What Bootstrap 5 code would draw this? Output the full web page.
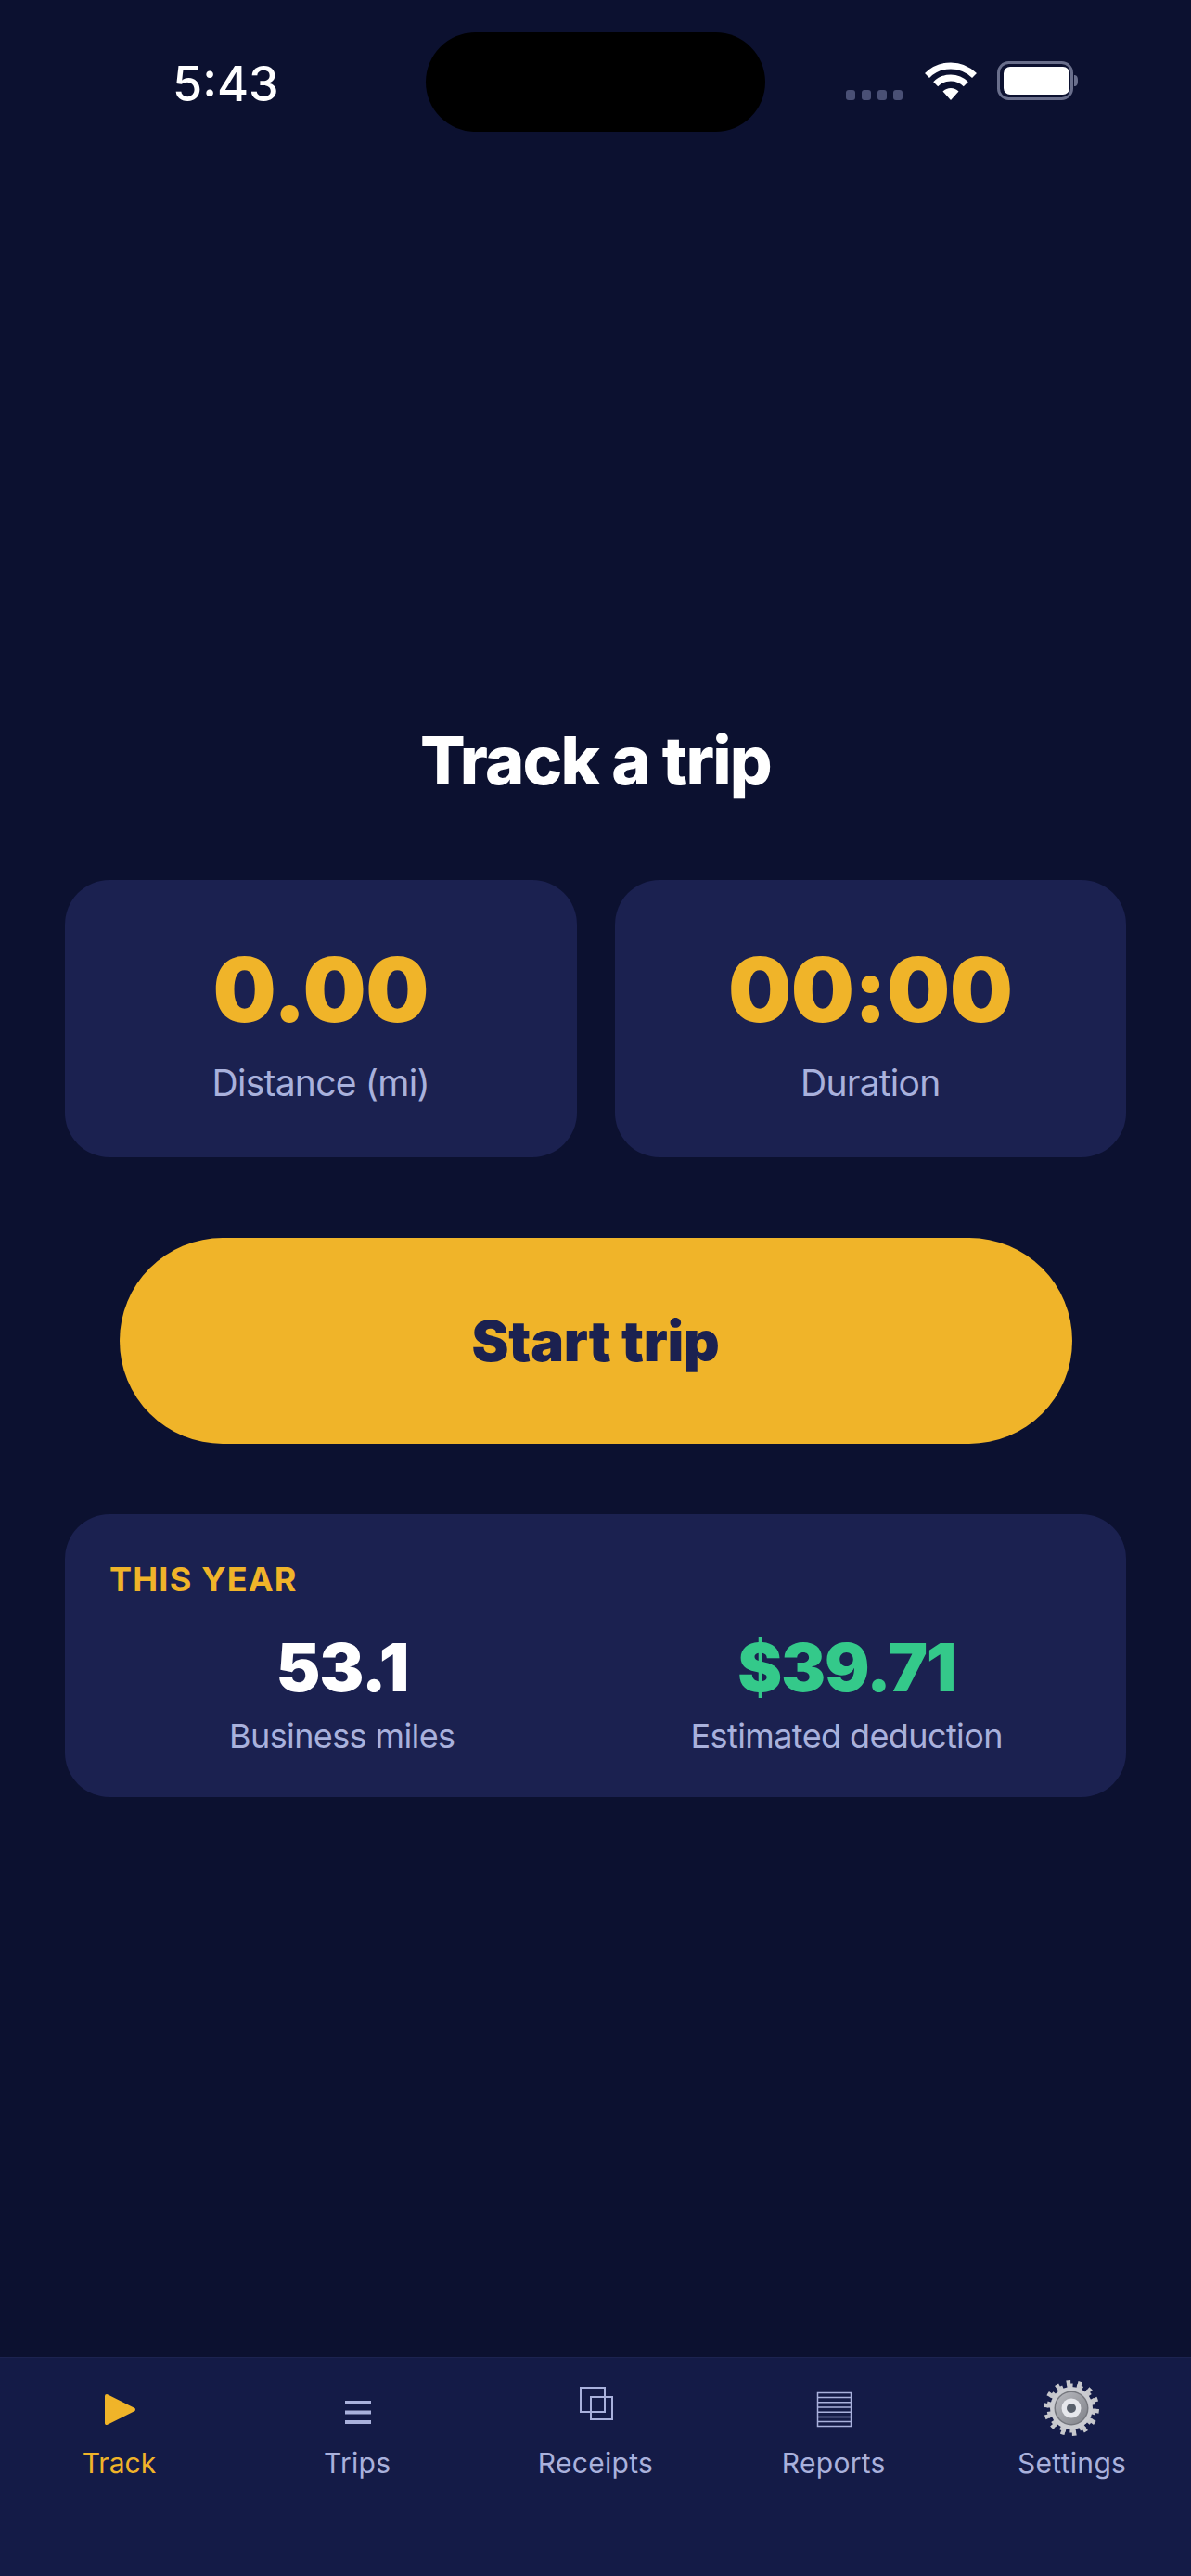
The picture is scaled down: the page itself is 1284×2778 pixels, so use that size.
<!DOCTYPE html>
<html lang="en">
<head>
  <meta charset="UTF-8" />
  <meta name="viewport" content="width=device-width, initial-scale=1" />
  <title>Track a trip</title>
  <link href="https://cdn.jsdelivr.net/npm/bootstrap@5.3.3/dist/css/bootstrap.min.css" rel="stylesheet" />
  <style>
    body { background: #0c1130; font-family: Inter, "Liberation Sans", sans-serif; color: #fff; }
    .phone { width: 1284px; height: 2778px; }

    .status-row { height: 171px; padding: 35px 0 0 186px; }
    .status-time { width: 273px; font-size: 52px; font-weight: 500; line-height: 1; margin-top: 30px; }
    .status-island { width: 366px; height: 107px; background: #000; border-radius: 54px; }
    .status-icons { margin: 32px 0 0 87px; }
    .signal-dots { gap: 7px; margin: 30px 24px 0 0; }
    .signal-dots span { width: 10px; height: 11px; border-radius: 3px; background: #4a5075; }
    .wifi-icon { margin-right: 22px; }
    .batt-icon { margin-top: -1px; }

    .screen-title { font-size: 72px; font-weight: 800; line-height: 87px; letter-spacing: -1.8px; margin-bottom: 86px; }
    .stat-row { gap: 41px; padding: 0 70px; margin-bottom: 87px; }
    .stat-panel { flex: 1; background: #1b2150; border-radius: 48px; padding: 60px 0 57px; gap: 19px; }
    .stat-value { font-size: 96px; font-weight: 900; line-height: 116px; letter-spacing: -.5px; color: #f0b429; }
    .stat-label { font-size: 39px; line-height: 47px; letter-spacing: -.75px; color: #a9b1dc; }

    .start-btn { width: 1027px; height: 222px; margin: 0 auto 76px; border-radius: 111px; border: 0; background: #f0b429; color: #1b2150; font-size: 60px; font-weight: 900; letter-spacing: -.3px; }
    .start-btn:hover { background: #f0b429; color: #1b2150; }

    .year-panel { margin: 0 70px; height: 305px; padding: 48px 48px 0 48px; background: #1b2150; border-radius: 48px; }
    .year-title { font-size: 36px; font-weight: 700; line-height: 44px; letter-spacing: 1.2px; color: #f0b429; margin-bottom: 29px; }
    .year-row { gap: 254px; padding-left: 129px; }
    .year-value { font-size: 72px; font-weight: 900; line-height: 87px; letter-spacing: -1.2px; margin-bottom: 9px; }
    .year-label { font-size: 36px; line-height: 44px; letter-spacing: -.6px; color: #a9b1dc; }
    .text-money { color: #34c98a; }

    .tab-row { height: 236px; background: #141b47; border-top: 1px solid #1c2350; padding-top: 23px; }
    .tab-item { flex: 1; color: #a9b1dc; font-size: 30px; line-height: 36px; letter-spacing: .3px; gap: 8px; }
    .tab-item.on { color: #f0b429; letter-spacing: 0; }
    .tab-item svg { display: block; }
  </style>
</head>
<body>
  <div class="phone d-flex flex-column">
    <div class="status-row d-flex align-items-start flex-shrink-0">
      <div class="status-time">5:43</div>
      <div class="status-island"></div>
      <div class="status-icons d-flex align-items-start">
        <div class="signal-dots d-flex"><span></span><span></span><span></span><span></span></div>
        <svg class="wifi-icon" width="56" height="41" viewBox="0 0 56 41">
          <g fill="none" stroke="#fff" stroke-width="7">
            <path d="M2.5 14.5A36 36 0 0 1 53.5 14.5" />
            <path d="M11.7 23.7A23 23 0 0 1 44.3 23.7" />
          </g>
          <path d="M28 41L19.5 31.5A12 12 0 0 1 36.5 31.5Z" fill="#fff" />
        </svg>
        <svg class="batt-icon" width="88" height="42" viewBox="0 0 88 42">
          <rect x="1.5" y="1.5" width="79" height="39" rx="11" fill="none" stroke="#6a6f8c" stroke-width="3" />
          <rect x="7" y="6" width="71" height="30" rx="7" fill="#fff" />
          <path d="M83 15c3 0 4 2 4 6s-1 6-4 6z" fill="#6a6f8c" />
        </svg>
      </div>
    </div>

    <main class="flex-grow-1 d-flex flex-column justify-content-center">
      <h1 class="screen-title text-center">Track a trip</h1>

      <div class="stat-row d-flex">
        <div class="stat-panel d-flex flex-column align-items-center">
          <div class="stat-value">0.00</div>
          <div class="stat-label">Distance (mi)</div>
        </div>
        <div class="stat-panel d-flex flex-column align-items-center">
          <div class="stat-value">00:00</div>
          <div class="stat-label">Duration</div>
        </div>
      </div>

      <button type="button" class="btn start-btn d-block">Start trip</button>

      <div class="year-panel">
        <div class="year-title">THIS YEAR</div>
        <div class="year-row d-flex">
          <div class="d-flex flex-column align-items-center">
            <div class="year-value">53.1</div>
            <div class="year-label">Business miles</div>
          </div>
          <div class="d-flex flex-column align-items-center">
            <div class="year-value text-money">$39.71</div>
            <div class="year-label">Estimated deduction</div>
          </div>
        </div>
      </div>
    </main>

    <nav class="tab-row d-flex flex-shrink-0">
      <div class="tab-item on d-flex flex-column align-items-center">
        <svg width="72" height="64" viewBox="0 0 72 64"><polygon points="23,18 52,32.5 23,47" fill="#f0b429" stroke="#f0b429" stroke-width="4" stroke-linejoin="round" /></svg>
        <span>Track</span>
      </div>
      <div class="tab-item d-flex flex-column align-items-center">
        <svg width="72" height="64" viewBox="0 0 72 64" fill="#a9b1dc"><rect x="23" y="23" width="28" height="4" /><rect x="23" y="33.5" width="28" height="4" /><rect x="23" y="44" width="28" height="4" /></svg>
        <span>Trips</span>
      </div>
      <div class="tab-item d-flex flex-column align-items-center">
        <svg width="72" height="64" viewBox="0 0 72 64" fill="none" stroke="#a9b1dc" stroke-width="2"><rect x="20" y="9" width="26" height="26" /><rect x="31" y="19" width="23" height="24" /></svg>
        <span>Receipts</span>
      </div>
      <div class="tab-item d-flex flex-column align-items-center">
        <svg width="72" height="64" viewBox="0 0 72 64" fill="none" stroke="#a9b1dc" stroke-width="1.5"><rect x="18.5" y="14.5" width="36" height="36" /><path d="M18.5 19.6H54.5M18.5 24.8H54.5M18.5 30H54.5M18.5 35.2H54.5M18.5 40.4H54.5M18.5 45.6H54.5" /></svg>
        <span>Reports</span>
      </div>
      <div class="tab-item d-flex flex-column align-items-center">
        <svg width="72" height="64" viewBox="0 0 72 64">
          <defs>
            <linearGradient id="gearRing" x1="0" y1="0" x2="1" y2="1">
              <stop offset="0" stop-color="#b9bac0" />
              <stop offset="1" stop-color="#808289" />
            </linearGradient>
          </defs>
          <g fill="none" stroke="#c6c7cc">
            <circle cx="35" cy="31" r="27.5" stroke-width="5" pathLength="14" stroke-dasharray=".36 .64" stroke-dashoffset="-.07" />
            <circle cx="35" cy="31" r="24" stroke-width="5" pathLength="14" stroke-dasharray=".6 .4" stroke-dashoffset="-.05" />
          </g>
          <circle cx="35" cy="31" r="23" fill="#cbccd1" />
          <circle cx="35" cy="31" r="18.5" fill="#75777e" />
          <circle cx="35" cy="31" r="17" fill="url(#gearRing)" />
          <circle cx="35" cy="31" r="10.5" fill="#e6e7ec" />
          <circle cx="35" cy="31" r="5" fill="#59606c" />
        </svg>
        <span>Settings</span>
      </div>
    </nav>
  </div>
  <script src="https://cdn.jsdelivr.net/npm/bootstrap@5.3.3/dist/js/bootstrap.bundle.min.js"></script>
</body>
</html>
